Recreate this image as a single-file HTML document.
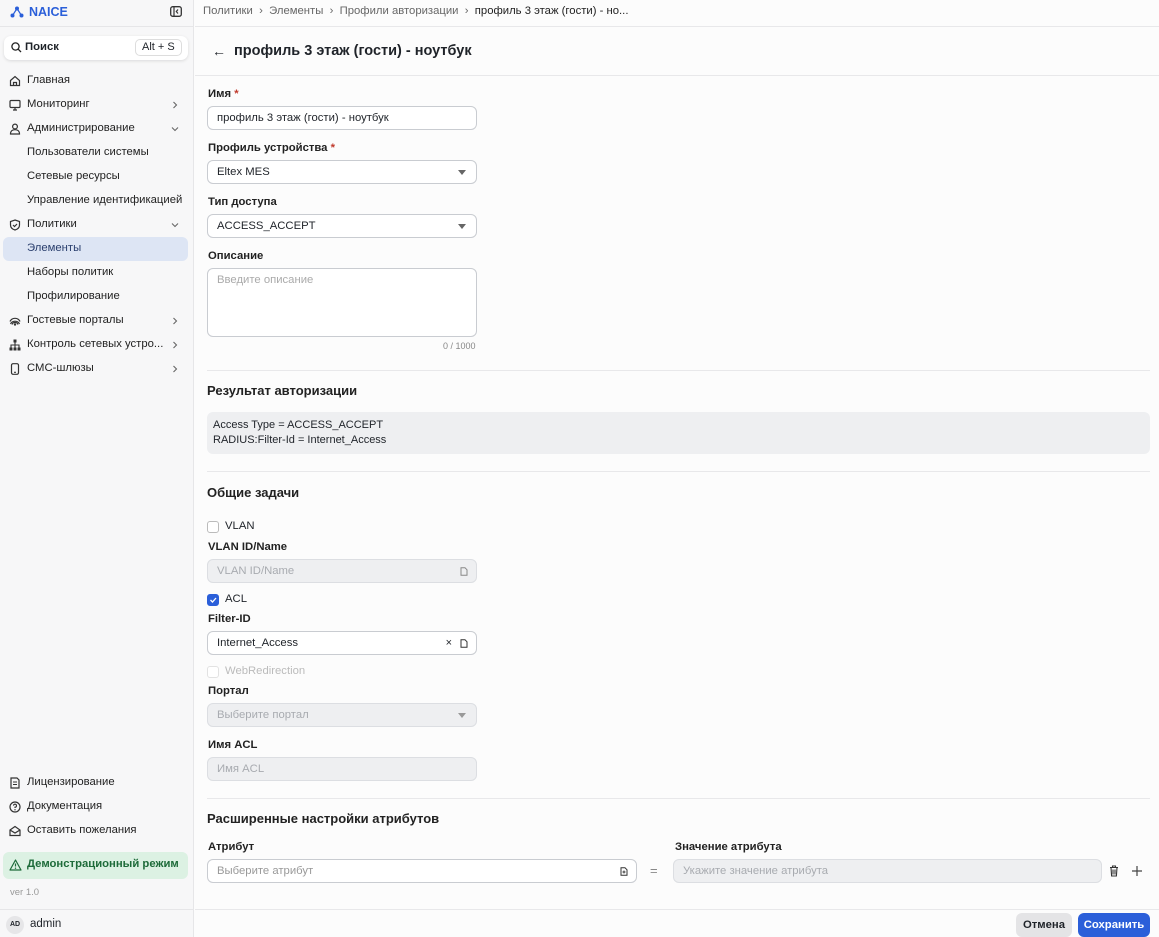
<!DOCTYPE html>
<html><head><meta charset="utf-8"><style>
*{box-sizing:border-box;margin:0;padding:0}
body{width:1159px;height:937px;overflow:hidden;font-family:"Liberation Sans",sans-serif;font-size:11.3px;color:#1f2329;background:#fcfcfc;position:relative}
.a{position:absolute}
#side{left:0;top:0;width:194px;height:937px;background:#f7f7f8;border-right:1px solid #e6e6e8}
.nav{position:absolute;left:27px;font-size:11.3px;color:#222}
.ic{position:absolute;left:9px;width:12px;height:12px}
.sub{position:absolute;left:27px;font-size:11.3px;color:#222}
.chev{position:absolute;left:171px;width:8px;height:8px}
.lbl{position:absolute;left:208px;font-size:11.3px;font-weight:bold;color:#222}
.inp{position:absolute;left:207px;width:270px;height:24px;border:1px solid #c9ccd1;border-radius:6px;background:#fff;padding:0 9px;line-height:22px;font-size:11.3px}
.dis{background:#eeeff1;border-color:#dcdee2;color:#a8abb0}
.hr{position:absolute;left:195px;right:0;height:1px;background:#e8e8ea}
.h2{position:absolute;left:207px;font-size:13px;font-weight:bold;color:#222}
.caret{position:absolute;right:10px;top:9px;width:0;height:0;border-left:4px solid transparent;border-right:4px solid transparent;border-top:5px solid #666}
.cb{position:absolute;left:207px;width:12px;height:12px;border:1px solid #bbb;border-radius:3px;background:#fff}
svg{display:block}
</style></head><body>
<div id="side" class="a">
 <div class="a" style="left:10px;top:5px;display:flex;align-items:center;gap:5px;color:#2b5fd9;font-weight:bold;font-size:12.5px">
  <svg width="14" height="12" viewBox="0 0 14 12"><circle cx="7" cy="2.5" r="2" fill="#2b5fd9"/><circle cx="2.5" cy="9.5" r="2" fill="#2b5fd9"/><circle cx="11.5" cy="9.5" r="2" fill="#2b5fd9"/><path d="M7 2.5L2.5 9.5M7 2.5l4.5 7" stroke="#2b5fd9" stroke-width="1.2"/></svg>NAICE</div>
 <svg class="a" style="left:170px;top:6px" width="12" height="11" viewBox="0 0 12 11"><rect x=".7" y=".7" width="10.6" height="9.6" rx="2" fill="none" stroke="#333" stroke-width="1.3"/><path d="M4 1v9M8 3.5L6.3 5.5 8 7.5" stroke="#333" stroke-width="1.2" fill="none"/></svg>
 <div class="a" style="left:0;top:26px;width:194px;height:1px;background:#e6e6e8"></div>
 <div class="a" style="left:4px;top:36px;width:184px;height:24px;background:#fff;border-radius:7px;box-shadow:0 1px 3px rgba(0,0,0,.12)">
  <svg class="a" style="left:7px;top:6px" width="11" height="11" viewBox="0 0 11 11"><circle cx="4.5" cy="4.5" r="3.6" fill="none" stroke="#222" stroke-width="1.3"/><path d="M7.2 7.2L10 10" stroke="#222" stroke-width="1.3"/></svg>
  <span class="a" style="left:21px;top:5px;font-weight:bold;font-size:11.3px">Поиск</span>
  <span class="a" style="left:131px;top:3px;border:1px solid #ddd;border-radius:5px;padding:1px 6px;font-size:11px;height:17px">Alt + S</span>
 </div>
 <svg class="ic" style="top:75px" viewBox="0 0 12 12"><path d="M1.5 5.5L6 1.5l4.5 4V10.5h-9z M4.5 10.5V7.5h3v3" fill="none" stroke="#333" stroke-width="1.2"/></svg><div class="nav" style="top:74px">Главная</div>
 <svg class="ic" style="top:99px" viewBox="0 0 12 12"><rect x="1" y="1.5" width="10" height="7" rx="1" fill="none" stroke="#333" stroke-width="1.2"/><path d="M4 11h4M6 8.5V11" stroke="#333" stroke-width="1.2"/></svg><div class="nav" style="top:98px">Мониторинг</div>
 <svg class="ic" style="top:123px" viewBox="0 0 12 12"><circle cx="6" cy="3.5" r="2.4" fill="none" stroke="#333" stroke-width="1.2"/><path d="M1.5 11c0-3 2-4.3 4.5-4.3s4.5 1.3 4.5 4.3z" fill="none" stroke="#333" stroke-width="1.2"/></svg><div class="nav" style="top:122px">Администрирование</div>
 <div class="sub" style="top:146px">Пользователи системы</div>
 <div class="sub" style="top:170px">Сетевые ресурсы</div>
 <div class="sub" style="top:194px">Управление идентификацией</div>
 <svg class="ic" style="top:219px" viewBox="0 0 12 12"><path d="M6 1l4.5 1.6V6c0 2.7-2 4.3-4.5 5-2.5-.7-4.5-2.3-4.5-5V2.6z" fill="none" stroke="#333" stroke-width="1.2"/><path d="M4 6l1.5 1.5L8 5" fill="none" stroke="#333" stroke-width="1.2"/></svg><div class="nav" style="top:218px">Политики</div>
 <div class="a" style="left:3px;top:237px;width:185px;height:24px;background:#dde5f4;border-radius:6px"></div>
 <div class="sub" style="top:242px;color:#2a3f6e">Элементы</div>
 <div class="sub" style="top:266px">Наборы политик</div>
 <div class="sub" style="top:290px">Профилирование</div>
 <svg class="ic" style="top:315px" viewBox="0 0 12 12"><path d="M1.5 9a5 5 0 0 1 9 0M3 9.5a3.2 3.2 0 0 1 6 0" fill="none" stroke="#333" stroke-width="1.2"/><path d="M1 6.5a5.5 5.5 0 0 1 10 0" fill="none" stroke="#333" stroke-width="1.2"/><circle cx="6" cy="9.5" r="1.2" fill="#333"/></svg><div class="nav" style="top:314px">Гостевые порталы</div>
 <svg class="ic" style="top:339px" viewBox="0 0 12 12"><rect x="4.5" y="0.5" width="3" height="3" fill="#333"/><rect x="0.5" y="8.5" width="3" height="3" fill="#333"/><rect x="4.5" y="8.5" width="3" height="3" fill="#333"/><rect x="8.5" y="8.5" width="3" height="3" fill="#333"/><path d="M6 3.5v5M2 8.5V6h8v2.5" fill="none" stroke="#333" stroke-width="1.1"/></svg><div class="nav" style="top:338px">Контроль сетевых устро...</div>
 <svg class="ic" style="top:363px" viewBox="0 0 12 12"><rect x="2.5" y=".7" width="7" height="10.6" rx="1.5" fill="none" stroke="#333" stroke-width="1.2"/><path d="M5 9.3h2" stroke="#333" stroke-width="1.1"/></svg><div class="nav" style="top:362px">СМС-шлюзы</div>
 <svg class="chev" style="top:101px" viewBox="0 0 8 8"><path d="M2.5 1l3 3-3 3" fill="none" stroke="#666" stroke-width="1.1"/></svg>
 <svg class="chev" style="top:125px" viewBox="0 0 8 8"><path d="M1 2.5l3 3 3-3" fill="none" stroke="#666" stroke-width="1.1"/></svg>
 <svg class="chev" style="top:221px" viewBox="0 0 8 8"><path d="M1 2.5l3 3 3-3" fill="none" stroke="#666" stroke-width="1.1"/></svg>
 <svg class="chev" style="top:317px" viewBox="0 0 8 8"><path d="M2.5 1l3 3-3 3" fill="none" stroke="#666" stroke-width="1.1"/></svg>
 <svg class="chev" style="top:341px" viewBox="0 0 8 8"><path d="M2.5 1l3 3-3 3" fill="none" stroke="#666" stroke-width="1.1"/></svg>
 <svg class="chev" style="top:365px" viewBox="0 0 8 8"><path d="M2.5 1l3 3-3 3" fill="none" stroke="#666" stroke-width="1.1"/></svg>
 <svg class="ic" style="top:777px" viewBox="0 0 12 12"><path d="M2 1h6l2 2v8H2z" fill="none" stroke="#333" stroke-width="1.2"/><path d="M4 5h4M4 7.5h4" stroke="#333" stroke-width="1.1"/></svg><div class="nav" style="top:776px">Лицензирование</div>
 <svg class="ic" style="top:801px" viewBox="0 0 12 12"><circle cx="6" cy="6" r="5" fill="none" stroke="#333" stroke-width="1.2"/><path d="M4.5 4.6a1.5 1.5 0 1 1 1.5 1.6V7" fill="none" stroke="#333" stroke-width="1.1"/><circle cx="6" cy="8.8" r=".7" fill="#333"/></svg><div class="nav" style="top:800px">Документация</div>
 <svg class="ic" style="top:825px" viewBox="0 0 12 12"><path d="M1 5l5-3.5L11 5v5.5H1z M1 5l5 3 5-3" fill="none" stroke="#333" stroke-width="1.2"/></svg><div class="nav" style="top:824px">Оставить пожелания</div>
 <div class="a" style="left:3px;top:852px;width:185px;height:27px;background:#dcf1e3;border-radius:6px"></div>
 <svg class="a" style="left:9px;top:859px" width="13" height="12" viewBox="0 0 13 12"><path d="M6.5 1L12 11H1z" fill="none" stroke="#1e6b3a" stroke-width="1.2" stroke-linejoin="round"/><path d="M6.5 4.5v3" stroke="#1e6b3a" stroke-width="1.2"/><circle cx="6.5" cy="9.2" r=".7" fill="#1e6b3a"/></svg>
 <div class="a" style="left:27px;top:858px;color:#1e6b3a;font-weight:bold;font-size:11.3px;white-space:nowrap">Демонстрационный режим</div>
 <div class="a" style="left:10px;top:887px;font-size:9.5px;color:#999">ver 1.0</div>
 <div class="a" style="left:0;top:909px;width:194px;height:1px;background:#e6e6e8"></div>
 <div class="a" style="left:6px;top:916px;width:18px;height:18px;border-radius:50%;background:#e6e6e8;font-size:7px;font-weight:bold;text-align:center;line-height:18px">AD</div>
 <div class="a" style="left:30px;top:918px;font-size:11.5px">admin</div>
</div>

<div class="a" style="left:203px;top:5px;font-size:11.3px;color:#666">Политики &nbsp;›&nbsp; Элементы &nbsp;›&nbsp; Профили авторизации &nbsp;›&nbsp; <span style="color:#222">профиль 3 этаж (гости) - но...</span></div>
<div class="hr" style="top:26px"></div>
<div class="a" style="left:212px;top:43px;font-size:14px">←</div>
<div class="a" style="left:234px;top:43px;font-size:14.5px;font-weight:bold">профиль 3 этаж (гости) - ноутбук</div>
<div class="hr" style="top:75px"></div>

<div class="lbl" style="top:88px">Имя <span style="color:#c0392b">*</span></div>
<div class="inp" style="top:106px">профиль 3 этаж (гости) - ноутбук</div>
<div class="lbl" style="top:142px">Профиль устройства <span style="color:#c0392b">*</span></div>
<div class="inp" style="top:160px">Eltex MES<span class="caret"></span></div>
<div class="lbl" style="top:196px">Тип доступа</div>
<div class="inp" style="top:214px">ACCESS_ACCEPT<span class="caret"></span></div>
<div class="lbl" style="top:250px">Описание</div>
<div class="inp" style="top:268px;height:69px;color:#aaa;line-height:22px">Введите описание</div>
<div class="a" style="left:443px;top:341px;font-size:9px;color:#888">0 / 1000</div>
<div class="hr" style="top:370px;left:207px;right:9px"></div>

<div class="h2" style="top:383px">Результат авторизации</div>
<div class="a" style="left:207px;top:412px;width:943px;height:42px;background:#eeeff1;border-radius:6px;padding:6px;font-size:11px;line-height:15px">Access Type = ACCESS_ACCEPT<br>RADIUS:Filter-Id = Internet_Access</div>
<div class="hr" style="top:471px;left:207px;right:9px"></div>

<div class="h2" style="top:485px">Общие задачи</div>
<div class="cb" style="top:521px"></div><div class="a" style="left:225px;top:520px">VLAN</div>
<div class="lbl" style="top:541px">VLAN ID/Name</div>
<div class="inp dis" style="top:559px">VLAN ID/Name<svg class="a" style="right:8px;top:7px" width="8" height="9" viewBox="0 0 8 9"><path d="M1 .8h4l2 2v5.4H1z" fill="none" stroke="#888" stroke-width="1"/></svg></div>
<div class="cb" style="top:594px;background:#2b5fd9;border-color:#2b5fd9"><svg width="10" height="10" viewBox="0 0 10 10"><path d="M2.5 5l2 2 3.5-4" fill="none" stroke="#fff" stroke-width="1.3"/></svg></div><div class="a" style="left:225px;top:593px">ACL</div>
<div class="lbl" style="top:613px">Filter-ID</div>
<div class="inp" style="top:631px">Internet_Access<span class="a" style="right:24px;top:0;font-size:11px">×</span><svg class="a" style="right:8px;top:7px" width="8" height="9" viewBox="0 0 8 9"><path d="M1 .8h4l2 2v5.4H1z" fill="none" stroke="#333" stroke-width="1"/></svg></div>
<div class="cb" style="top:666px;border-color:#e2e2e2"></div><div class="a" style="left:225px;top:665px;color:#bbb">WebRedirection</div>
<div class="lbl" style="top:685px">Портал</div>
<div class="inp dis" style="top:703px">Выберите портал<span class="caret" style="border-top-color:#999"></span></div>
<div class="lbl" style="top:739px">Имя ACL</div>
<div class="inp dis" style="top:757px">Имя ACL</div>
<div class="hr" style="top:798px;left:207px;right:9px"></div>

<div class="h2" style="top:811px">Расширенные настройки атрибутов</div>
<div class="lbl" style="top:841px">Атрибут</div>
<div class="lbl" style="top:841px;left:675px">Значение атрибута</div>
<div class="inp" style="top:859px;width:430px;color:#999">Выберите атрибут<svg class="a" style="right:8px;top:7px" width="8" height="9" viewBox="0 0 8 9"><path d="M1 .8h4l2 2v5.4H1z" fill="none" stroke="#333" stroke-width="1"/><path d="M4 3.5v3M2.5 5h3" stroke="#333" stroke-width=".9"/></svg></div>
<div class="a" style="left:650px;top:863px;color:#888;font-size:13px">=</div>
<div class="inp dis" style="top:859px;left:673px;width:429px">Укажите значение атрибута</div>
<svg class="a" style="left:1109px;top:865px" width="10" height="12" viewBox="0 0 10 12"><path d="M1 2.5h8M3.5 2.5V1h3v1.5M2 2.5l.6 8.5h4.8L8 2.5M4 4.5v5M6 4.5v5" fill="none" stroke="#333" stroke-width="1.1"/></svg>
<svg class="a" style="left:1132px;top:866px" width="10" height="10" viewBox="0 0 10 10"><path d="M5 0v10M0 5h10" stroke="#444" stroke-width="1.2"/></svg>

<div class="hr" style="top:909px"></div>
<div class="a" style="left:1016px;top:913px;width:56px;height:24px;background:#e4e4e6;border-radius:6px;text-align:center;line-height:24px;font-weight:bold;font-size:11.3px">Отмена</div>
<div class="a" style="left:1078px;top:913px;width:72px;height:24px;background:#2b5fd9;border-radius:6px;text-align:center;line-height:24px;font-weight:bold;font-size:11.3px;color:#fff">Сохранить</div>
</body></html>
